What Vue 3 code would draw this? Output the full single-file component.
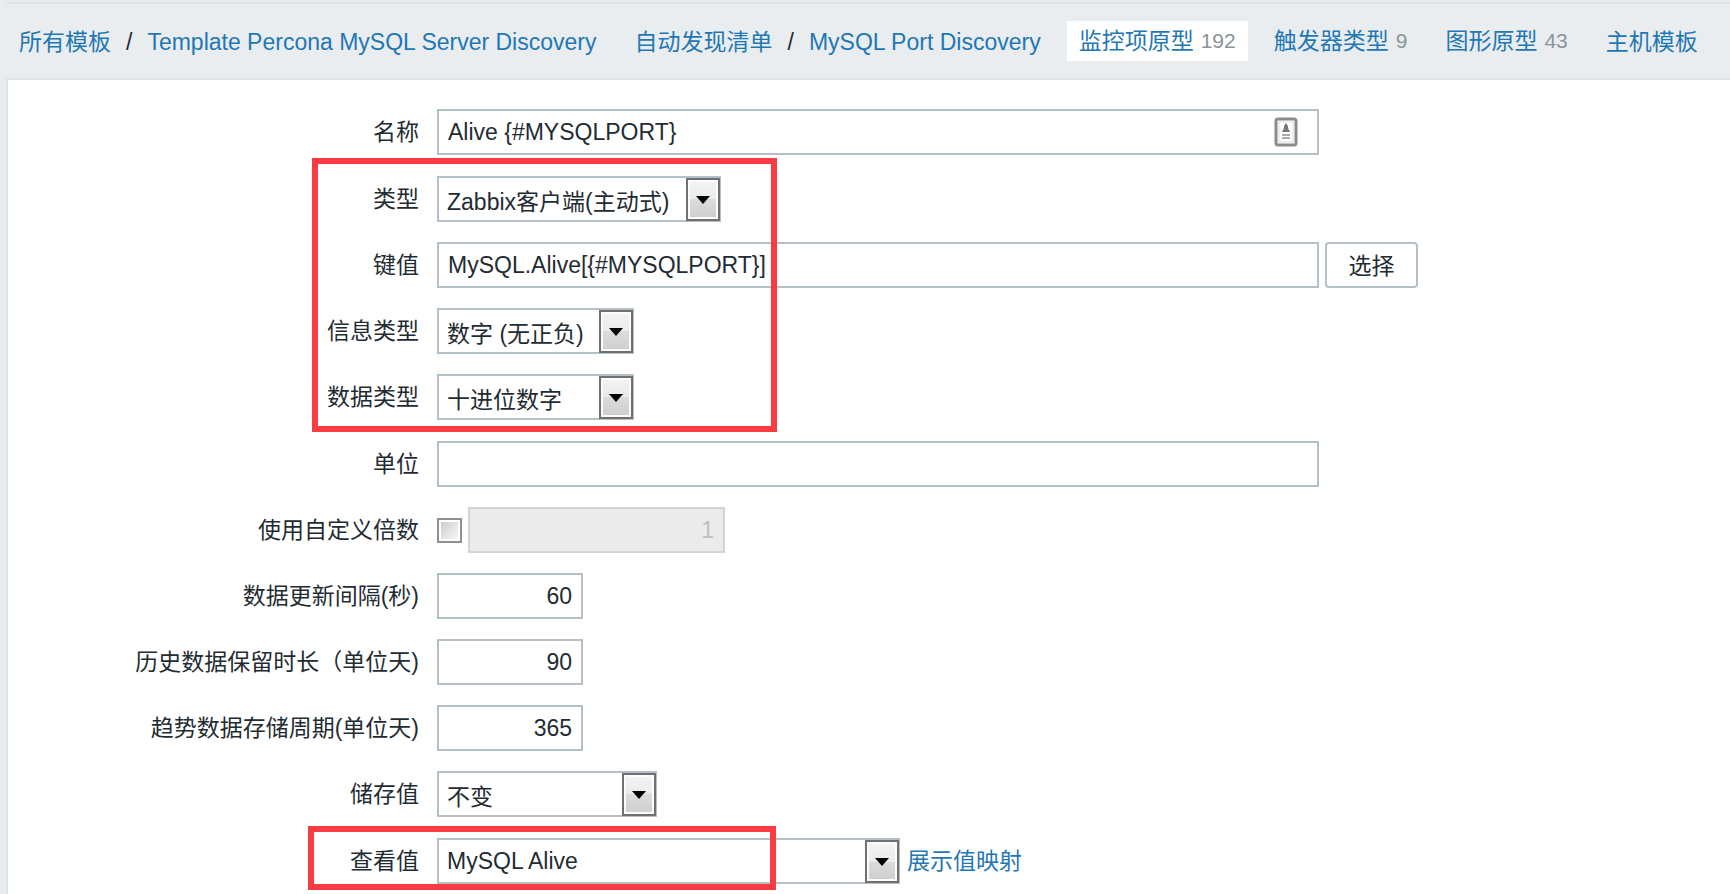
<script setup>
import { ref } from 'vue'

const name = ref('Alive {#MYSQLPORT}')
const key = ref('MySQL.Alive[{#MYSQLPORT}]')
const units = ref('')
const useMultiplier = ref(false)
const multiplier = ref('1')
const delay = ref('60')
const history = ref('90')
const trends = ref('365')
</script>

<template>
  <div class="page">
    <nav class="nav">
      <div class="crumb">
        <a href="#">所有模板</a>
        <span class="slash">/</span>
        <a href="#">Template Percona MySQL Server Discovery</a>
      </div>
      <div class="crumb">
        <a href="#">自动发现清单</a>
        <span class="slash">/</span>
        <a href="#">MySQL Port Discovery</a>
      </div>
      <div class="crumb tab selected"><a href="#">监控项原型</a><span class="count">192</span></div>
      <div class="crumb tab"><a href="#">触发器类型</a><span class="count">9</span></div>
      <div class="crumb tab"><a href="#">图形原型</a><span class="count">43</span></div>
      <div class="crumb"><a href="#">主机模板</a></div>
    </nav>

    <form class="panel" @submit.prevent>
      <div class="group">
        <div class="row">
          <label for="name">名称</label>
          <div class="wide-box">
            <input id="name" v-model="name" class="field" type="text" />
            <svg class="card-icon" viewBox="0 0 24 30" aria-hidden="true">
              <rect x="2" y="2" width="20" height="26" rx="2" fill="#fff" stroke="#8b8b8b" stroke-width="3" />
              <rect x="5" y="5" width="14" height="20" fill="none" stroke="#dcdcdc" />
              <path d="M12 6 L14 9 V11 L16 15 H8 L10 11 V9 Z" fill="#777" />
              <path d="M8 18 H16 M8 21 H16" stroke="#aaa" stroke-width="2" />
            </svg>
          </div>
        </div>
      </div>

      <div class="group framed types">
        <div class="row">
          <label for="type">类型</label>
          <div class="select w-type">
            <select id="type"><option>Zabbix客户端(主动式)</option></select>
            <span class="arrow"></span>
          </div>
        </div>
        <div class="row">
          <label for="key">键值</label>
          <div class="wide-box"><input id="key" v-model="key" class="field" type="text" /></div>
          <button type="button" class="choose">选择</button>
        </div>
        <div class="row">
          <label for="value-type">信息类型</label>
          <div class="select w-info">
            <select id="value-type"><option>数字 (无正负)</option></select>
            <span class="arrow"></span>
          </div>
        </div>
        <div class="row">
          <label for="data-type">数据类型</label>
          <div class="select w-info">
            <select id="data-type"><option>十进位数字</option></select>
            <span class="arrow"></span>
          </div>
        </div>
      </div>

      <div class="group">
        <div class="row">
          <label for="units">单位</label>
          <div class="wide-box"><input id="units" v-model="units" class="field" type="text" /></div>
        </div>
        <div class="row">
          <label for="use-multiplier">使用自定义倍数</label>
          <input id="use-multiplier" v-model="useMultiplier" class="check" type="checkbox" />
          <input v-model="multiplier" class="field number multiplier" type="text" aria-label="倍数" :disabled="!useMultiplier" />
        </div>
        <div class="row">
          <label for="delay">数据更新间隔(秒)</label>
          <input id="delay" v-model="delay" class="field number" type="text" />
        </div>
        <div class="row">
          <label for="history">历史数据保留时长（单位天)</label>
          <input id="history" v-model="history" class="field number" type="text" />
        </div>
        <div class="row">
          <label for="trends">趋势数据存储周期(单位天)</label>
          <input id="trends" v-model="trends" class="field number" type="text" />
        </div>
        <div class="row">
          <label for="store">储存值</label>
          <div class="select w-store">
            <select id="store"><option>不变</option></select>
            <span class="arrow"></span>
          </div>
        </div>
      </div>

      <div class="group framed view">
        <div class="row">
          <label for="show">查看值</label>
          <div class="select w-show">
            <select id="show"><option>MySQL Alive</option></select>
            <span class="arrow"></span>
          </div>
          <a href="#" class="map-link">展示值映射</a>
        </div>
      </div>
    </form>
  </div>
</template>

<style>
body {
  margin: 0;
  background: #e9edf0;
}
</style>

<style scoped>
*,
*::after {
  box-sizing: border-box;
}

.page {
  display: flex;
  flex-direction: column;
  min-height: 100vh;
  padding: 2px 0 0 6px;
  font-family: "Liberation Sans", "Noto Sans CJK SC", sans-serif;
  font-size: 23px;
  line-height: 30px;
  color: #1f2c33;
  overflow-x: hidden;
}

a {
  color: #1f78b4;
  text-decoration: none;
}

.nav {
  display: flex;
  align-items: center;
  gap: 14px;
  height: 76px;
  padding-left: 1px;
  border-top: 2px solid #dfe4e7;
  white-space: nowrap;
}

.crumb {
  display: flex;
  align-items: center;
  gap: 15px;
  height: 40px;
  padding: 2px 12px 0;
}

.tab {
  gap: 7px;
  padding-top: 0;
}

.selected {
  background: #fff;
}

.count {
  font-size: 21px;
  color: #8a9499;
}

.panel {
  display: flex;
  flex: 1;
  flex-direction: column;
  gap: 21px;
  padding: 29px 0 10px;
  background: #fff;
  border: 2px solid #dfe4e7;
  border-width: 2px 0 0 2px;
}

.group {
  position: relative;
  display: flex;
  flex-direction: column;
  gap: 20px;
}

.row {
  display: flex;
  align-items: center;
  height: 46px;
}

.row > label {
  flex: none;
  width: 429px;
  padding-right: 18px;
  text-align: right;
  white-space: nowrap;
}

.wide-box {
  position: relative;
  flex: 0 1 882px;
  min-width: 0;
}

.field {
  display: block;
  width: 100%;
  height: 46px;
  padding: 0 9px;
  border: 2px solid #b4c0c6;
  border-radius: 0;
  background: #fff;
  font: inherit;
  color: #1f2c33;
}

.number {
  width: 146px;
  text-align: right;
}

.multiplier {
  width: 257px;
  margin-left: 6px;
}

.multiplier:disabled {
  background: #ebebeb;
  border-color: #d0d5d8;
  color: #bac1c5;
}

.card-icon {
  position: absolute;
  top: 8px;
  right: 21px;
  width: 24px;
  height: 30px;
}

.choose {
  flex: none;
  width: 93px;
  height: 46px;
  margin-left: 6px;
  padding: 2px 0 0;
  border: 2px solid #b4c0c6;
  border-radius: 4px;
  background: #fff;
  font: inherit;
  color: #1f2c33;
}

.check {
  appearance: none;
  flex: none;
  width: 25px;
  height: 25px;
  margin: 0;
  border: 2px solid #8e8f8f;
  background: linear-gradient(135deg, #cbcfd3, #f6f6f6) content-box #f4f4f4;
  padding: 2px;
}

.check:checked {
  background: #1f78b4 content-box;
}

.select {
  position: relative;
  flex: none;
}

.select select {
  appearance: none;
  display: block;
  width: 100%;
  height: 46px;
  padding: 5px 36px 0 8px;
  border: 2px solid #b4c0c6;
  border-radius: 0;
  background: #fff;
  font: inherit;
  color: #1f2c33;
}

.arrow {
  position: absolute;
  top: 2px;
  right: 1px;
  bottom: 1px;
  display: flex;
  align-items: center;
  justify-content: center;
  width: 34px;
  border: 2px solid #707070;
  background: linear-gradient(#f3f3f3, #ebebeb 50%, #dcdcdc 50%, #cecece);
  box-shadow: inset 0 0 0 2px #fbfbfb;
  pointer-events: none;
}

.arrow::after {
  content: "";
  border: 7px solid transparent;
  border-top: 8px solid #000;
  border-bottom: 0;
}

.w-type {
  width: 284px;
}

.w-info {
  width: 197px;
}

.w-store {
  width: 220px;
}

.w-show {
  width: 463px;
}

.w-show select {
  padding-top: 0;
}

.map-link {
  margin-left: 7px;
}

.framed::after {
  content: "";
  position: absolute;
  border: 6px solid #f93c42;
  pointer-events: none;
}

.types::after {
  top: -18px;
  bottom: -12px;
  left: 304px;
  width: 465px;
}

.view::after {
  top: -12px;
  bottom: -6px;
  left: 300px;
  width: 468px;
}
</style>
